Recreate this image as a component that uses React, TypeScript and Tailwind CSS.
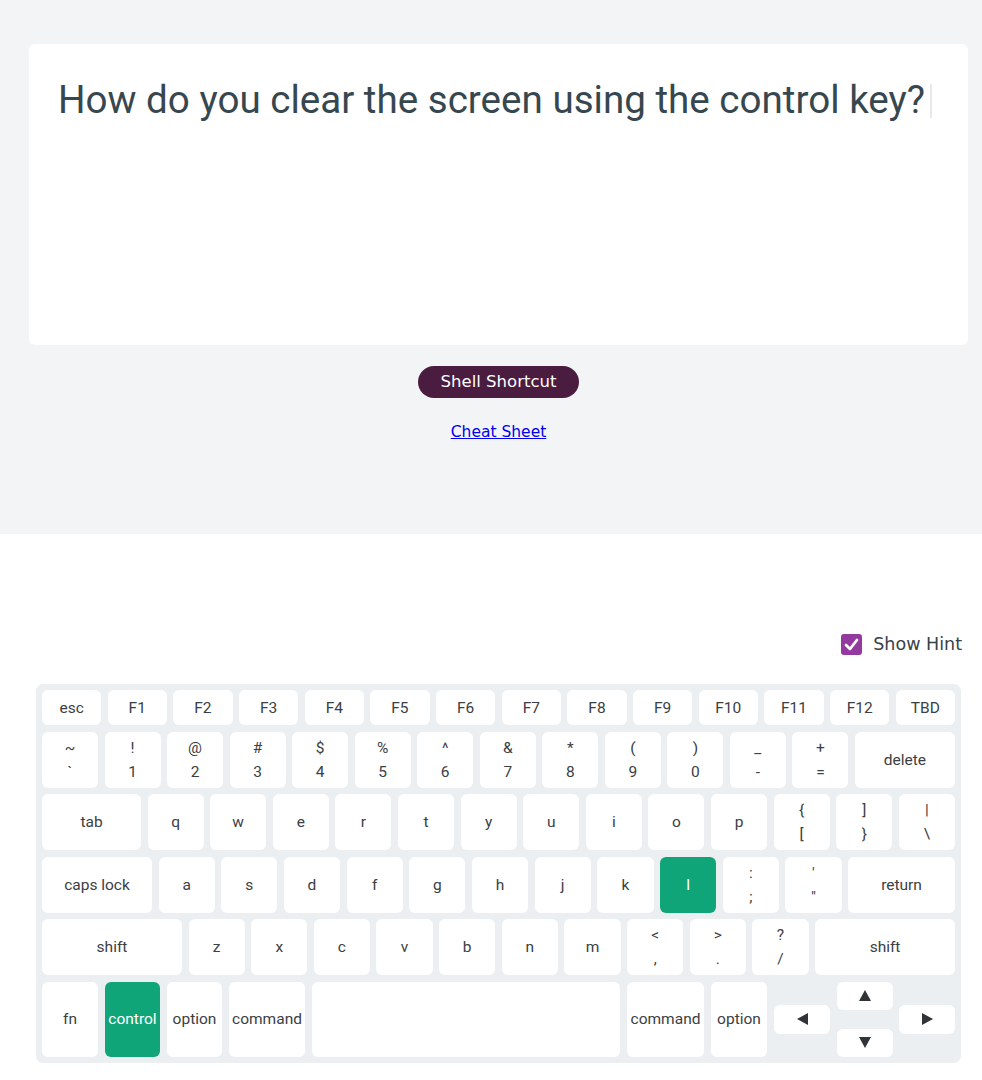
import type { ReactNode } from 'react'

type KeyProps = {
  children?: ReactNode
  className?: string
  active?: boolean
}

function Key({ children, className = 'flex-1', active = false }: KeyProps) {
  return (
    <div
      className={`${className} flex items-center justify-center rounded-[6px] text-[15.5px] leading-6 text-center ${
        active ? 'bg-[#10a579] text-white' : 'bg-white text-[#3b4044]'
      }`}
    >
      {children}
    </div>
  )
}

function Dual({ top, bottom }: { top: string; bottom: string }) {
  return (
    <div className="flex flex-col items-center leading-6">
      <span>{top}</span>
      <span>{bottom}</span>
    </div>
  )
}

const fnRow = ['esc', 'F1', 'F2', 'F3', 'F4', 'F5', 'F6', 'F7', 'F8', 'F9', 'F10', 'F11', 'F12', 'TBD']

const numRow = [
  ['~', '`'],
  ['!', '1'],
  ['@', '2'],
  ['#', '3'],
  ['$', '4'],
  ['%', '5'],
  ['^', '6'],
  ['&', '7'],
  ['*', '8'],
  ['(', '9'],
  [')', '0'],
  ['_', '-'],
  ['+', '='],
]

function Triangle({ dir }: { dir: 'up' | 'down' | 'left' | 'right' }) {
  const points = {
    up: '6,0 12,11 0,11',
    down: '0,0 12,0 6,11',
    left: '11,0 11,12 0,6',
    right: '0,0 11,6 0,12',
  }[dir]
  const vertical = dir === 'up' || dir === 'down'
  return (
    <svg
      width={vertical ? 12 : 11}
      height={vertical ? 11 : 12}
      viewBox={vertical ? '0 0 12 11' : '0 0 11 12'}
    >
      <polygon points={points} fill="#2f3437" />
    </svg>
  )
}

export default function App() {
  return (
    <div className="min-h-screen bg-white font-['Roboto',sans-serif]">
      {/* question area */}
      <div className="bg-[#f3f4f6] h-[534px] pt-[44px] pl-[29px] pr-[14px]">
        <div className="bg-white rounded-md h-[301px] px-[29px] pt-[33px]">
          <p className="text-[38.6px] leading-[1.2] text-[#37474f] whitespace-nowrap">
            How do you clear the screen using the control key?
            <span className="inline-block w-[2px] h-[34px] bg-[#e6e8eb] ml-[5px] align-[-5px]" />
          </p>
        </div>
        <div className="flex flex-col items-center font-['DejaVu_Sans',sans-serif]">
          <button className="mt-[21px] h-[32px] px-[23px] rounded-full bg-[#4a1d40] text-white text-[16.5px]">
            Shell Shortcut
          </button>
          <a href="#" className="mt-[23px] text-[15.5px] text-[#0000ee] underline">
            Cheat Sheet
          </a>
        </div>
      </div>

      {/* hint toggle */}
      <div className="flex justify-end items-center gap-[11px] pt-[97px] pr-[20px] font-['DejaVu_Sans',sans-serif]">
        <div className="w-[21px] h-[21px] rounded-[3px] bg-[#93399f] flex items-center justify-center">
          <svg width="15" height="13" viewBox="0 0 15 13">
            <path d="M2 7 L6 11 L13 2" stroke="white" strokeWidth="2.8" fill="none" strokeLinecap="round" strokeLinejoin="round" />
          </svg>
        </div>
        <span className="text-[17.5px] text-[#3a4147]">Show Hint</span>
      </div>

      {/* keyboard */}
      <div className="ml-[36px] mt-[27px] w-[925px] bg-[#eceff1] rounded-[7px] p-[6px] flex flex-col gap-[6.5px]">
        <div className="flex gap-[6.5px] h-[35px]">
          {fnRow.map((k) => (
            <Key key={k}>{k}</Key>
          ))}
        </div>

        <div className="flex gap-[6.5px] h-[56px]">
          {numRow.map(([t, b]) => (
            <Key key={b}>
              <Dual top={t} bottom={b} />
            </Key>
          ))}
          <Key className="w-[100px]">delete</Key>
        </div>

        <div className="flex gap-[6.5px] h-[56px]">
          <Key className="w-[99px]">tab</Key>
          {['q', 'w', 'e', 'r', 't', 'y', 'u', 'i', 'o', 'p'].map((k) => (
            <Key key={k}>{k}</Key>
          ))}
          <Key>
            <Dual top="{" bottom="[" />
          </Key>
          <Key>
            <Dual top="]" bottom="}" />
          </Key>
          <Key>
            <Dual top="|" bottom="\" />
          </Key>
        </div>

        <div className="flex gap-[6.5px] h-[56px]">
          <Key className="w-[110px]">caps lock</Key>
          {['a', 's', 'd', 'f', 'g', 'h', 'j', 'k'].map((k) => (
            <Key key={k}>{k}</Key>
          ))}
          <Key active>l</Key>
          <Key>
            <Dual top=":" bottom=";" />
          </Key>
          <Key>
            <Dual top="'" bottom={'"'} />
          </Key>
          <Key className="w-[107px]">return</Key>
        </div>

        <div className="flex gap-[6.5px] h-[56px]">
          <Key className="w-[140px]">shift</Key>
          {['z', 'x', 'c', 'v', 'b', 'n', 'm'].map((k) => (
            <Key key={k}>{k}</Key>
          ))}
          <Key>
            <Dual top="<" bottom="," />
          </Key>
          <Key>
            <Dual top=">" bottom="." />
          </Key>
          <Key>
            <Dual top="?" bottom="/" />
          </Key>
          <Key className="w-[140px]">shift</Key>
        </div>

        <div className="flex gap-[7px] h-[75px]">
          <Key className="w-[56px]">fn</Key>
          <Key className="w-[55px]" active>
            control
          </Key>
          <Key className="w-[55px]">option</Key>
          <Key className="w-[76px]">command</Key>
          <Key />
          <Key className="w-[77px]">command</Key>
          <Key className="w-[56px]">option</Key>
          <div className="w-[181px] flex gap-[6.5px]">
            <div className="flex-1 flex items-center">
              <Key className="w-full h-[29px]">
                <Triangle dir="left" />
              </Key>
            </div>
            <div className="flex-1 flex flex-col justify-between">
              <Key className="w-full h-[28px]">
                <Triangle dir="up" />
              </Key>
              <Key className="w-full h-[28px]">
                <Triangle dir="down" />
              </Key>
            </div>
            <div className="flex-1 flex items-center">
              <Key className="w-full h-[29px]">
                <Triangle dir="right" />
              </Key>
            </div>
          </div>
        </div>
      </div>
    </div>
  )
}
